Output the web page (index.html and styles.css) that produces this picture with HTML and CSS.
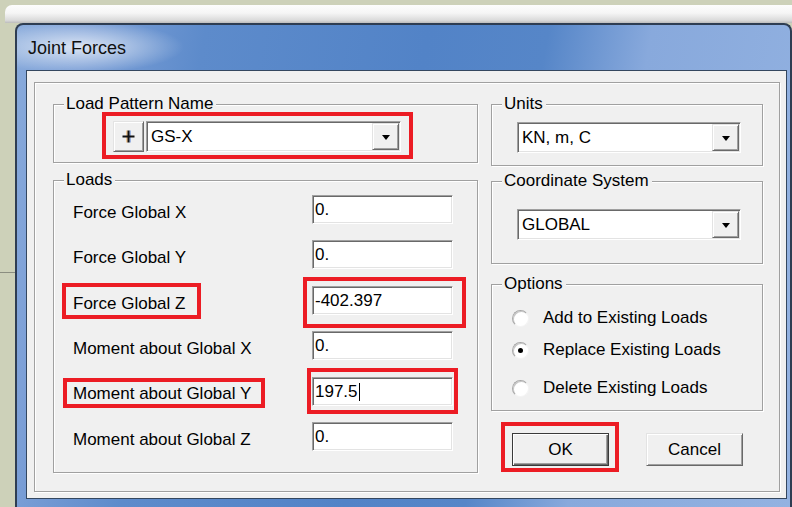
FILE: index.html
```html
<!DOCTYPE html>
<html lang="en">
<head>
<meta charset="utf-8">
<title>Joint Forces</title>
<link rel="stylesheet" href="styles.css">
</head>
<body>
<div class="desk">
  <div class="glow"></div>
  <div class="window">
    <div class="titlebar"><span class="title">Joint Forces</span></div>
    <div class="client">
      <div class="panel">
        <div class="col-left">
          <div class="group group-pattern">
            <div class="group-title">Load Pattern Name</div>
            <div class="mark mark-pattern">
              <div class="raised btn-plus">
                <svg width="13" height="13" viewBox="0 0 13 13" aria-hidden="true">
                  <line x1="5" y1="0.5" x2="5" y2="12.5" stroke="#f0a040" stroke-width="1"/>
                  <line x1="8" y1="0.5" x2="8" y2="12.5" stroke="#4a78d0" stroke-width="1"/>
                  <line x1="6.5" y1="0.5" x2="6.5" y2="12.5" stroke="#111" stroke-width="2"/>
                  <line x1="0.5" y1="6.5" x2="12.5" y2="6.5" stroke="#111" stroke-width="2"/>
                </svg>
              </div>
              <div class="combo combo-pattern">
                <span class="combo-text">GS-X</span>
                <span class="raised drop"></span>
              </div>
            </div>
          </div>

          <div class="group group-loads">
            <div class="group-title">Loads</div>
            <div class="loads-grid">
              <div class="lbl">Force Global X</div>
              <div class="field">0.</div>

              <div class="lbl">Force Global Y</div>
              <div class="field">0.</div>

              <div class="mark mark-lbl-fz"><div class="lbl-in">Force Global Z</div></div>
              <div class="mark mark-fld-fz"><div class="field field-in">-402.397</div></div>

              <div class="lbl">Moment about Global X</div>
              <div class="field">0.</div>

              <div class="mark mark-lbl-my"><div class="lbl-in">Moment about Global Y</div></div>
              <div class="mark mark-fld-my"><div class="field field-in">197.5<span class="caret"></span></div></div>

              <div class="lbl">Moment about Global Z</div>
              <div class="field">0.</div>
            </div>
          </div>
        </div>

        <div class="col-right">
          <div class="group group-units">
            <div class="group-title">Units</div>
            <div class="combo combo-right combo-units">
              <span class="combo-text">KN, m, C</span>
              <span class="raised drop"></span>
            </div>
          </div>

          <div class="group group-coord">
            <div class="group-title">Coordinate System</div>
            <div class="combo combo-right combo-coord">
              <span class="combo-text">GLOBAL</span>
              <span class="raised drop"></span>
            </div>
          </div>

          <div class="group group-options">
            <div class="group-title">Options</div>
            <div class="radio-row row-add"><span class="radio"></span><span class="radio-label">Add to Existing Loads</span></div>
            <div class="radio-row row-replace"><span class="radio checked"></span><span class="radio-label">Replace Existing Loads</span></div>
            <div class="radio-row row-delete"><span class="radio"></span><span class="radio-label">Delete Existing Loads</span></div>
          </div>

          <div class="actions">
            <div class="mark mark-ok"><div class="raised btn btn-default">OK</div></div>
            <div class="raised btn btn-cancel">Cancel</div>
          </div>
        </div>
      </div>
    </div>
  </div>
</div>
</body>
</html>
```

FILE: styles.css
```css
* { box-sizing: border-box; }

html, body { margin: 0; padding: 0; }

body {
  width: 792px;
  height: 507px;
  overflow: hidden;
  background:
    linear-gradient(#8b8e80, #8b8e80) 0 272px / 15px 1px no-repeat,
    #cdd1b9;
  font-family: "Liberation Sans", Arial, sans-serif;
  font-size: 17px;
  color: #000;
}

.desk { padding: 5px 0 0 5px; }

/* soft glow above the window frame */
.glow {
  height: 18px;
  border-radius: 7px 0 0 0;
  background: linear-gradient(#fdfdfd 0%, #f5f5f5 45%, #dadada 85%, #bcbcbc 100%);
}

/* window frame with the glass caption */
.window {
  margin-left: 10px;
  width: 777px;
  height: 490px;
  border: 2px solid #2e3d52;
  border-bottom: none;
  border-radius: 8px 8px 0 0;
  background: linear-gradient(100deg, #88aadb 0%, #7da0d7 8%, #5d8bcb 22%, #5283c7 48%, #5686c8 62%, #88a9dc 74%, #93b2e1 100%);
}

.titlebar {
  height: 45px;
  padding: 13px 0 0 11px;
  border-radius: 6px 6px 0 0;
  background: radial-gradient(ellipse 105px 26px at 62px 22px, rgba(255,255,255,.72), rgba(255,255,255,0));
}

.title {
  font-size: 18px;
  line-height: 20px;
  color: #101010;
}

.client {
  margin-left: 9px;
  width: 761px;
  height: 429px;
  border: 1px solid #34475f;
  background: #f0f0f0;
  padding-top: 11px;
}

/* etched frame around the dialog body */
.panel {
  margin-left: 7px;
  width: 746px;
  height: 410px;
  border: 1px solid #a0a0a0;
  box-shadow: inset 1px 1px 0 #fff, 1px 1px 0 #fff;
  padding: 21px 16px 0 18px;
  display: flex;
  align-items: flex-start;
  gap: 13px;
}

.col-left {
  width: 425px;
  display: flex;
  flex-direction: column;
}

.col-right {
  width: 272px;
  display: flex;
  flex-direction: column;
}

/* group boxes */
.group {
  border: 1px solid #a0a0a0;
  box-shadow: inset 1px 1px 0 #fff, 1px 1px 0 #fff;
  display: flex;
  flex-direction: column;
  align-items: flex-start;
}

.group-title {
  margin: -11px 0 -9px 10px;
  padding: 0 3px 0 2px;
  line-height: 20px;
  background: #f0f0f0;
  white-space: nowrap;
}

/* red highlight frames */
.mark {
  border: 4px solid #ec1c24;
}

/* Load pattern */
.group-pattern { padding-bottom: 3px; }

.mark-pattern {
  margin: 7px 0 0 48px;
  width: 311px;
  height: 47px;
  padding: 5px 8px 0 7px;
  display: flex;
  gap: 2px;
}

/* 3D raised controls */
.raised {
  background: #f0f0f0;
  border: 1px solid;
  border-color: #e3e3e3 #696969 #696969 #e3e3e3;
  box-shadow: inset 1px 1px 0 #fff, inset -1px -1px 0 #a0a0a0;
}

.btn-plus {
  width: 31px;
  height: 31px;
  display: flex;
  align-items: center;
  justify-content: center;
}

.btn-plus svg { display: block; }

/* combo boxes */
.combo {
  display: flex;
  height: 31px;
  padding: 1px;
  background: #fff;
  border: 1px solid;
  border-color: #a0a0a0 #fff #fff #a0a0a0;
  box-shadow: inset 1px 1px 0 #696969, inset -1px -1px 0 #e3e3e3;
}

.combo-pattern { width: 255px; }

.combo-text {
  flex: 1;
  padding: 4px 0 0 3px;
  line-height: 20px;
  white-space: nowrap;
}

.drop {
  width: 27px;
  height: 27px;
  display: flex;
  align-items: center;
  justify-content: center;
}

.drop::after {
  content: "";
  border-left: 4px solid transparent;
  border-right: 4px solid transparent;
  border-top: 5px solid #000;
  margin-top: 1px;
}

/* Loads */
.group-loads {
  margin-top: 17px;
  height: 293px;
}

.loads-grid {
  display: grid;
  grid-template-columns: 239px 141px;
  grid-template-rows: repeat(6, 45.4px);
  align-items: start;
  justify-items: start;
  padding: 6px 0 0 19px;
}

.lbl {
  margin-top: 16px;
  line-height: 20px;
  white-space: nowrap;
}

.lbl-in {
  line-height: 20px;
  white-space: nowrap;
}

.field {
  margin-top: 8px;
  width: 141px;
  height: 29px;
  padding: 4px 2px 0;
  line-height: 20px;
  background: #fff;
  border: 1px solid;
  border-color: #a0a0a0 #fff #fff #a0a0a0;
  box-shadow: inset 1px 1px 0 #696969, inset -1px -1px 0 #e3e3e3;
  white-space: nowrap;
}

.field-in { margin-top: 0; }

.mark-lbl-fz {
  margin: 5px 0 0 -11px;
  width: 139px;
  padding: 7px 0 1px 7px;
}

.mark-fld-fz {
  margin: -1px 0 0 -9px;
  padding: 5px 9px 9px 5px;
}

.mark-lbl-my {
  margin: 9.4px 0 0 -10px;
  width: 202px;
  padding: 1.6px 0 0.4px 6px;
}

.mark-fld-my {
  margin: -1px 0 0 -5px;
  padding: 5px 1px 4px 1px;
}

.caret {
  display: inline-block;
  width: 1px;
  height: 18px;
  background: #000;
  vertical-align: -4px;
  margin-left: 1px;
}

/* Right column */
.group-units { padding-bottom: 12px; }

.combo-right {
  margin: 17px 0 0 25px;
  width: 224px;
}

.group-coord {
  margin-top: 15px;
  padding-bottom: 23px;
}

.combo-coord { margin-top: 27px; }

.group-options {
  margin-top: 20px;
  padding-bottom: 12px;
}

.radio-row {
  display: flex;
  align-items: center;
  height: 20px;
  margin-left: 20px;
  line-height: 20px;
  white-space: nowrap;
}

.row-add { margin-top: 23px; }
.row-replace { margin-top: 12px; }
.row-delete { margin-top: 18px; }

.radio {
  width: 17px;
  height: 17px;
  border-radius: 50%;
  background: #fff;
  border: 1px solid;
  border-color: #a8a8a8 #f4f4f4 #f4f4f4 #a8a8a8;
  box-shadow: inset 1px 1px 0 #c8c8c8;
  display: flex;
  align-items: center;
  justify-content: center;
}

.radio.checked::after {
  content: "";
  width: 5px;
  height: 5px;
  border-radius: 50%;
  background: #000;
}

.radio-label { margin-left: 14px; }

/* OK / Cancel */
.actions {
  display: flex;
  align-items: flex-start;
  margin-top: 11px;
}

.mark-ok {
  margin-left: 10px;
  padding: 7px 6px 2px 7px;
}

.btn {
  width: 97px;
  height: 33px;
  line-height: 31px;
  text-align: center;
}

.btn-default {
  border-color: #3a3a3a;
  box-shadow: inset 1px 1px 0 #fff, inset -1px -1px 0 #696969, inset -2px -2px 0 #a0a0a0;
}

.btn-cancel {
  margin: 11px 0 0 27px;
}
```
